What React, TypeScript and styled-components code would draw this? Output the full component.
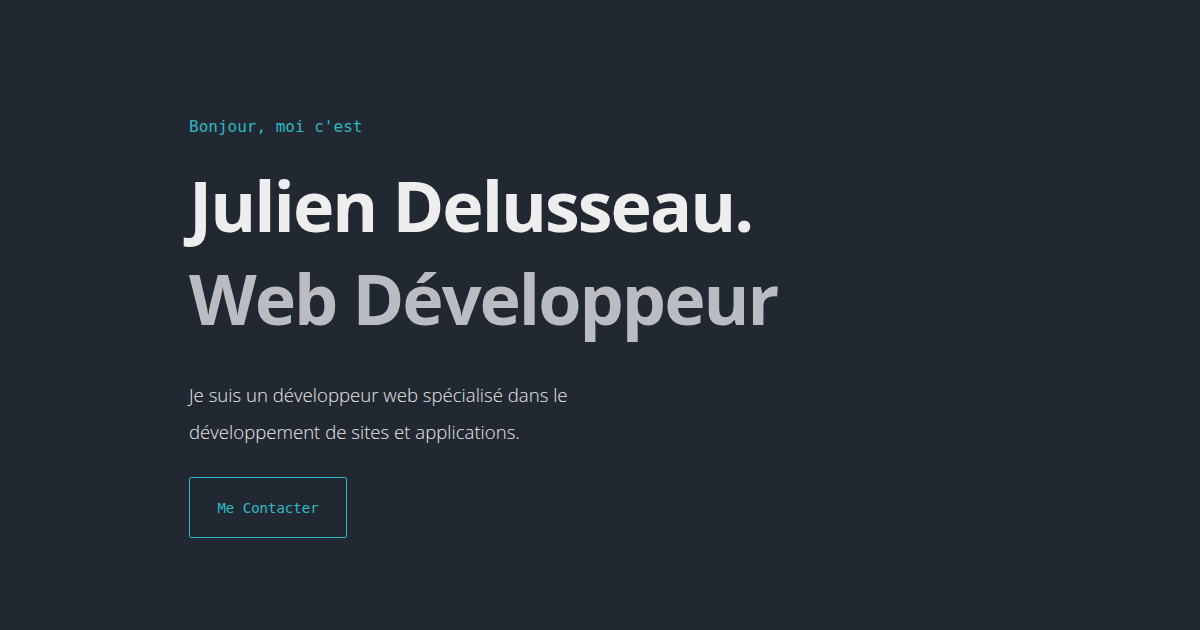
import React from "react";
import styled, { createGlobalStyle } from "styled-components";

const Global = createGlobalStyle`
  html, body { margin: 0; padding: 0; background: #222831; }
  body { font-family: "Open Sans", "Noto Sans", sans-serif; }
`;

const Page = styled.main`
  width: 1200px;
  height: 630px;
  box-sizing: border-box;
  background: #222831;
  padding: 116px 0 0 189px;
  display: flex;
  flex-direction: column;
  align-items: flex-start;
`;

const Intro = styled.p`
  margin: 0;
  font-family: "DejaVu Sans Mono", "Liberation Mono", monospace;
  font-size: 16px;
  line-height: 22px;
  color: #2bb8c6;
`;

const Title = styled.h1<{ $muted?: boolean }>`
  margin: 0;
  font-family: "Open Sans", "Noto Sans", sans-serif;
  font-weight: 700;
  font-size: 70px;
  line-height: 93px;
  letter-spacing: -2px;
  color: ${(p) => (p.$muted ? "#bbbcc1" : "#eeeeee")};
`;

const Titles = styled.div`
  margin-top: 21px;
  display: flex;
  flex-direction: column;
`;

const Lead = styled.p`
  margin: 31px 0 0;
  max-width: 410px;
  font-family: "Open Sans", "Noto Sans", sans-serif;
  font-weight: 300;
  font-size: 18.6px;
  line-height: 37px;
  color: #e8e8ea;
`;

const Button = styled.a`
  margin-top: 27px;
  display: flex;
  align-items: center;
  justify-content: center;
  width: 158px;
  height: 61px;
  box-sizing: border-box;
  border: 1px solid #2bb8c6;
  border-radius: 2px;
  font-family: "DejaVu Sans Mono", "Liberation Mono", monospace;
  font-size: 14px;
  color: #2bbcc8;
  text-decoration: none;
`;

export default function App() {
  return (
    <>
      <Global />
      <Page>
        <Intro>Bonjour, moi c'est</Intro>
        <Titles>
          <Title>Julien Delusseau.</Title>
          <Title $muted>Web Développeur</Title>
        </Titles>
        <Lead>
          Je suis un développeur web spécialisé dans le développement de sites et applications.
        </Lead>
        <Button href="#contact">Me Contacter</Button>
      </Page>
    </>
  );
}
